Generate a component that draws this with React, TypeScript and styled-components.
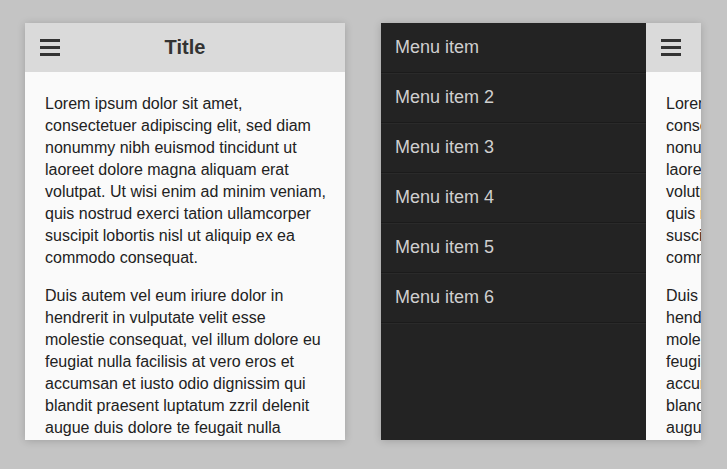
import React from 'react';
import styled, { createGlobalStyle } from 'styled-components';

const GlobalStyle = createGlobalStyle`
  html, body {
    margin: 0;
    padding: 0;
    background: #c4c4c4;
  }
  body {
    font-family: "Liberation Sans", Arial, sans-serif;
  }
`;

const menuItems = ['Menu item', 'Menu item 2', 'Menu item 3', 'Menu item 4', 'Menu item 5', 'Menu item 6'];

const paragraphs = [
  'Lorem ipsum dolor sit amet, consectetuer adipiscing elit, sed diam nonummy nibh euismod tincidunt ut laoreet dolore magna aliquam erat volutpat. Ut wisi enim ad minim veniam, quis nostrud exerci tation ullamcorper suscipit lobortis nisl ut aliquip ex ea commodo consequat.',
  'Duis autem vel eum iriure dolor in hendrerit in vulputate velit esse molestie consequat, vel illum dolore eu feugiat nulla facilisis at vero eros et accumsan et iusto odio dignissim qui blandit praesent luptatum zzril delenit augue duis dolore te feugait nulla facilisi.',
];

function Hamburger() {
  return (
    <svg width="20" height="17" viewBox="0 0 20 17">
      <rect x="0" y="0" width="20" height="3" fill="#333" />
      <rect x="0" y="7" width="20" height="3" fill="#333" />
      <rect x="0" y="14" width="20" height="3" fill="#333" />
    </svg>
  );
}

function Page() {
  return (
    <PageBox>
      <Header>
        <MenuButton>
          <Hamburger />
        </MenuButton>
        <Title>Title</Title>
      </Header>
      <Content>
        {paragraphs.map((p, i) => (
          <Para key={i}>{p}</Para>
        ))}
      </Content>
    </PageBox>
  );
}

function App() {
  return (
    <>
      <GlobalStyle />
      <Stage>
        <Phone>
          <Page />
        </Phone>
        <Phone>
          <Drawer>
            {menuItems.map((m) => (
              <MenuItem key={m}>{m}</MenuItem>
            ))}
          </Drawer>
          <Page />
        </Phone>
      </Stage>
    </>
  );
}

const Stage = styled.div`
  display: flex;
  gap: 36px;
  padding: 23px 0 0 25px;
  height: 469px;
  box-sizing: border-box;
`;

const Phone = styled.div`
  width: 320px;
  height: 417px;
  display: flex;
  overflow: hidden;
  box-shadow: 0 1px 8px rgba(0, 0, 0, 0.18);
`;

const PageBox = styled.div`
  width: 320px;
  flex-shrink: 0;
  background: #fafafa;
`;

const Header = styled.div`
  position: relative;
  height: 49px;
  background: #dadada;
  display: flex;
  align-items: center;
  justify-content: center;
`;

const MenuButton = styled.div`
  position: absolute;
  left: 15px;
  top: 16px;
  display: flex;
`;

const Title = styled.h1`
  margin: 0;
  font-size: 20px;
  font-weight: bold;
  color: #333;
`;

const Content = styled.div`
  padding: 21px 16px 21px 20px;
`;

const Para = styled.p`
  margin: 0 0 16px;
  font-size: 16px;
  line-height: 22px;
  color: #222;
`;

const Drawer = styled.div`
  width: 265px;
  flex-shrink: 0;
  background: #232323;
`;

const MenuItem = styled.div`
  height: 50px;
  box-sizing: border-box;
  display: flex;
  align-items: center;
  padding-left: 14px;
  font-size: 18px;
  color: #cfcfcf;
  border-bottom: 1px solid #1b1b1b;
  box-shadow: 0 1px 0 #2a2a2a;
  position: relative;
`;

export default App;
